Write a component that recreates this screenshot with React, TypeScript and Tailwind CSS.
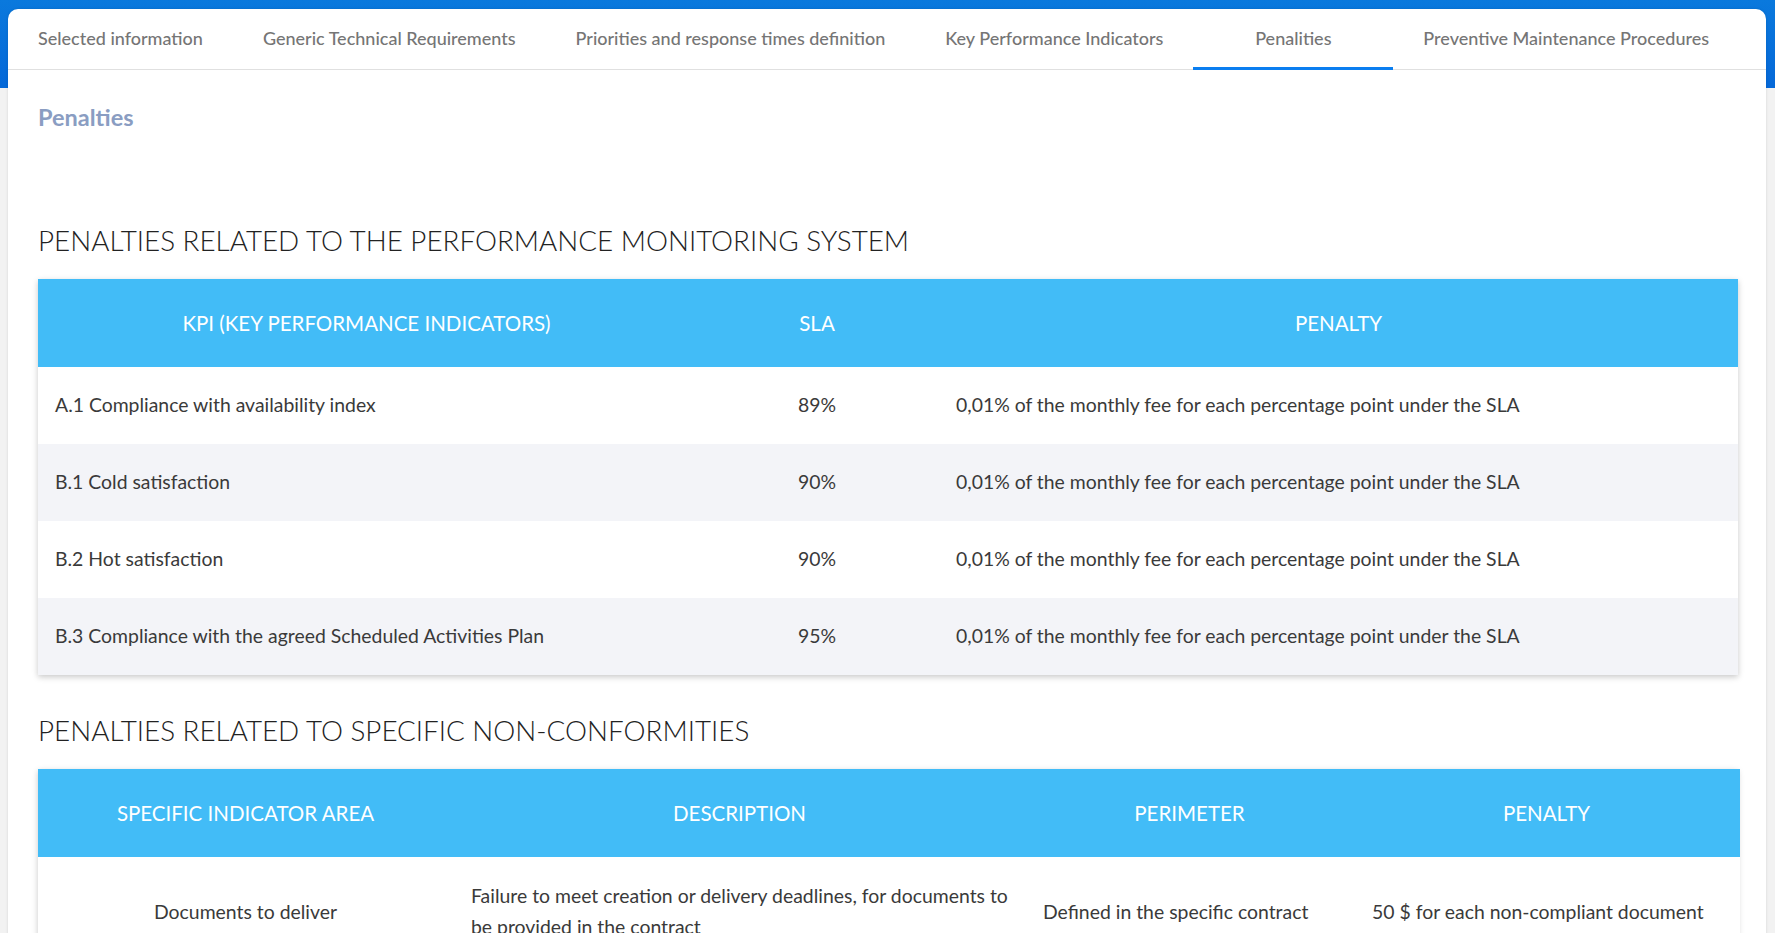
const TABS = [
  'Selected information',
  'Generic Technical Requirements',
  'Priorities and response times definition',
  'Key Performance Indicators',
  'Penalities',
  'Preventive Maintenance Procedures',
];

const KPI_ROWS = [
  { kpi: 'A.1 Compliance with availability index', sla: '89%' },
  { kpi: 'B.1 Cold satisfaction', sla: '90%' },
  { kpi: 'B.2 Hot satisfaction', sla: '90%' },
  { kpi: 'B.3 Compliance with the agreed Scheduled Activities Plan', sla: '95%' },
];

const PENALTY_TEXT = '0,01% of the monthly fee for each percentage point under the SLA';

export default function App() {
  const active = 'Penalities';

  return (
    <div className="min-h-screen bg-[linear-gradient(to_bottom,#0a79dd_0px,#0568d8_88px,#f2f2f2_88px)] pt-[9px] pl-[8px] pr-[9px] font-['Lato','Liberation_Sans',sans-serif]">
      <div className="min-h-[924px] rounded-t-[10px] bg-white shadow-[0_0_3px_rgba(0,0,0,0.12)]">
        {/* Tabs */}
        <div className="flex h-[61px] border-b border-[#e0e0e0]">
          {TABS.map((tab) => (
            <div
              key={tab}
              className="relative flex min-w-[200px] items-center justify-center px-[30px] pb-[2px] text-[18px] font-medium text-[#757575]"
            >
              {tab}
              {tab === active && (
                <span className="absolute bottom-[-1px] left-0 right-0 h-[3px] bg-[#0a7ef0]" />
              )}
            </div>
          ))}
        </div>

        <div className="pl-[30px] pr-[28px]">
          <h2 className="mt-[32px] text-[23.5px] leading-[30px] font-bold text-[#8a9dc2]">Penalties</h2>

          <h3 className="mt-[91px] text-[27.8px] leading-[36px] font-light text-[#222]">
            PENALTIES RELATED TO THE PERFORMANCE MONITORING SYSTEM
          </h3>

          <div className="mt-[20px] shadow-[0_2px_6px_rgba(0,0,0,0.22)]">
            <table className="w-full table-fixed border-collapse">
              <colgroup>
                <col className="w-[657px]" />
                <col className="w-[244px]" />
                <col className="w-[799px]" />
              </colgroup>
              <thead>
                <tr className="h-[88px] bg-[#42bcf7] text-[20.5px] text-white">
                  <th className="font-normal">KPI (KEY PERFORMANCE INDICATORS)</th>
                  <th className="font-normal">SLA</th>
                  <th className="font-normal">PENALTY</th>
                </tr>
              </thead>
              <tbody>
                {KPI_ROWS.map((row, i) => (
                  <tr
                    key={row.kpi}
                    className={`h-[77px] text-[19.4px] text-[#3a3a3a] ${i % 2 === 1 ? 'bg-[#f3f4f8]' : 'bg-white'}`}
                  >
                    <td className="px-[17px] pb-[1px]">{row.kpi}</td>
                    <td className="pb-[1px] text-center">{row.sla}</td>
                    <td className="px-[17px] pb-[1px]">{PENALTY_TEXT}</td>
                  </tr>
                ))}
              </tbody>
            </table>
          </div>

          <h3 className="mt-[38px] text-[27.8px] leading-[36px] font-light text-[#222]">
            PENALTIES RELATED TO SPECIFIC NON-CONFORMITIES
          </h3>

          <div className="mt-[20px] shadow-[0_2px_6px_rgba(0,0,0,0.22)]">
            <table className="w-full table-fixed border-collapse">
              <colgroup>
                <col className="w-[415px]" />
                <col className="w-[573px]" />
                <col className="w-[327px]" />
                <col className="w-[387px]" />
              </colgroup>
              <thead>
                <tr className="h-[88px] bg-[#42bcf7] text-[20.5px] text-white">
                  <th className="font-normal">SPECIFIC INDICATOR AREA</th>
                  <th className="font-normal">DESCRIPTION</th>
                  <th className="font-normal">PERIMETER</th>
                  <th className="font-normal">PENALTY</th>
                </tr>
              </thead>
              <tbody>
                <tr className="bg-white text-[19.4px] leading-[31px] text-[#3a3a3a]">
                  <td className="px-[17px] py-[23px] text-center">Documents to deliver</td>
                  <td className="px-[18px] py-[23px]">
                    <span className="whitespace-nowrap">Failure to meet creation or delivery deadlines, for documents to</span>
                    <br />
                    be provided in the contract
                  </td>
                  <td className="px-[17px] py-[23px]">Defined in the specific contract</td>
                  <td className="px-[19px] py-[23px]">50 $ for each non-compliant document</td>
                </tr>
              </tbody>
            </table>
          </div>
        </div>
      </div>
    </div>
  );
}
